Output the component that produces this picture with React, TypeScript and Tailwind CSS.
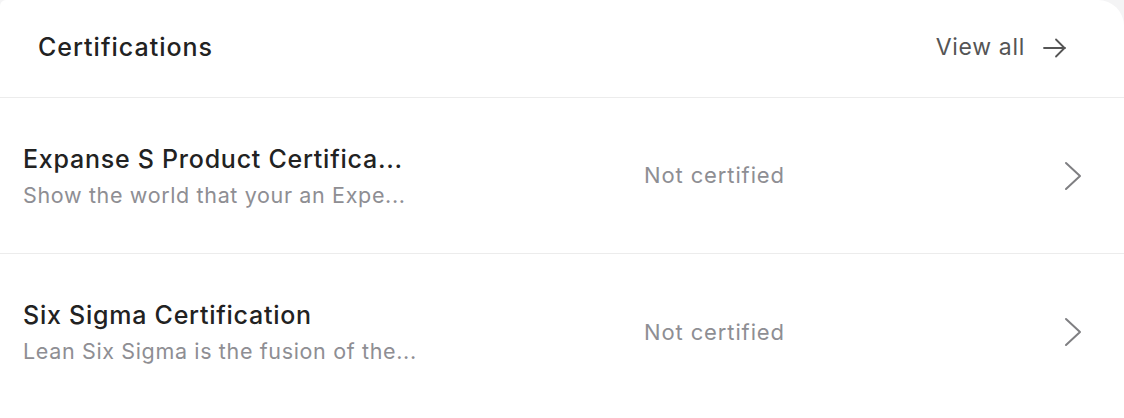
const certs = [
  {
    title: "Expanse S Product Certifica...",
    description: "Show the world that your an Expe...",
    status: "Not certified",
  },
  {
    title: "Six Sigma Certification",
    description: "Lean Six Sigma is the fusion of the...",
    status: "Not certified",
  },
]

export default function App() {
  return (
    <div className="min-h-screen bg-[#f4f4f5] font-['Inter',sans-serif]">
      <div className="h-[418px] overflow-hidden rounded-tr-[26px] rounded-tl-[6px] bg-white">
        {/* Header */}
        <header className="flex h-[98px] items-center justify-between border-b border-[#ececec] pl-[38px] pr-[58px]">
          <h2 className="-mt-[2px] text-[25px] font-medium tracking-[0.04em] text-[#222222]">Certifications</h2>
          <button className="-mt-[2px] flex items-center gap-[18px] text-[23px] tracking-[0.03em] text-[#555555]">
            View all
            <svg width="23" height="20" viewBox="0 0 23 20" fill="none" stroke="currentColor" strokeWidth="1.8" strokeLinecap="round" strokeLinejoin="round">
              <path d="M1 10h21" />
              <path d="M13 1.5l8.5 8.5-8.5 8.5" />
            </svg>
          </button>
        </header>

        {/* Rows */}
        {certs.map((c, i) => (
          <div
            key={c.title}
            className={`flex h-[156px] items-center pl-[23px] pr-[42px] ${i === 0 ? "border-b border-[#ececec]" : ""}`}
          >
            <div className="w-[621px] shrink-0">
              <div className="whitespace-nowrap text-[25px] font-medium leading-[32px] tracking-[0.03em] text-[#222222]">
                {c.title}
              </div>
              <div className="mt-[6px] whitespace-nowrap text-[21.5px] leading-[28px] tracking-[0.03em] text-[#8e8e93]">
                {c.description}
              </div>
            </div>
            <div className="flex-1 text-[22px] tracking-[0.04em] text-[#8e8e93]">{c.status}</div>
            <svg width="18" height="30" viewBox="0 0 18 30" fill="none" stroke="#7f7f82" strokeWidth="2" strokeLinecap="round" strokeLinejoin="round">
              <path d="M2 2l14 13-14 13" />
            </svg>
          </div>
        ))}
      </div>
    </div>
  )
}
